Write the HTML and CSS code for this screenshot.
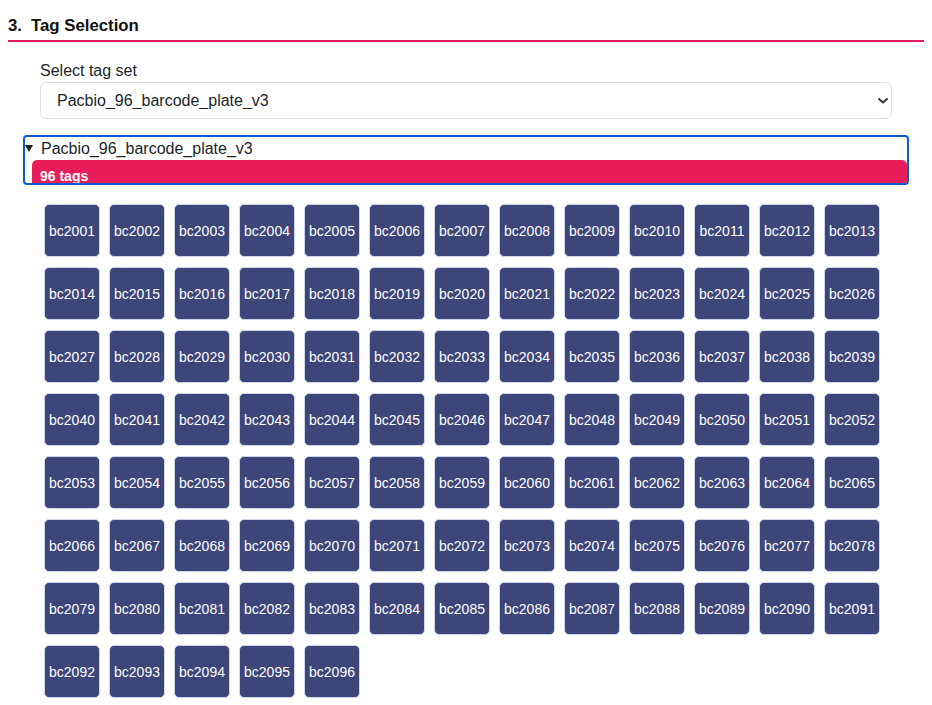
FILE: index.html
```html
<!DOCTYPE html>
<html lang="en">
<head>
<meta charset="utf-8">
<title>Tag Selection</title>
<link rel="stylesheet" href="styles.css">
</head>
<body>
<section class="section">
  <h2 class="section-title"><span class="section-num">3.</span>Tag Selection</h2>
  <div class="field">
    <label class="field-label" for="tagset">Select tag set</label>
    <div class="select-wrap">
      <select id="tagset" class="select">
        <option>Pacbio_96_barcode_plate_v3</option>
      </select>
      <svg class="chev" width="10" height="6" viewBox="0 0 10 6" aria-hidden="true"><path d="M1 1 L5 4.6 L9 1" fill="none" stroke="#343a40" stroke-width="2" stroke-linecap="round" stroke-linejoin="round"/></svg>
    </div>
  </div>
  <details class="tagset" open>
    <summary class="tagset-summary"><svg class="tri" width="8" height="7" viewBox="0 0 8 7" aria-hidden="true"><path d="M0 0 H8 L4 7 Z" fill="#222"/></svg>Pacbio_96_barcode_plate_v3</summary>
    <div class="tag-count">96 tags</div>
  </details>
  <div class="tag-grid">
    <div class="tag">bc2001</div><div class="tag">bc2002</div><div class="tag">bc2003</div><div class="tag">bc2004</div><div class="tag">bc2005</div><div class="tag">bc2006</div><div class="tag">bc2007</div><div class="tag">bc2008</div><div class="tag">bc2009</div><div class="tag">bc2010</div><div class="tag">bc2011</div><div class="tag">bc2012</div><div class="tag">bc2013</div>
    <div class="tag">bc2014</div><div class="tag">bc2015</div><div class="tag">bc2016</div><div class="tag">bc2017</div><div class="tag">bc2018</div><div class="tag">bc2019</div><div class="tag">bc2020</div><div class="tag">bc2021</div><div class="tag">bc2022</div><div class="tag">bc2023</div><div class="tag">bc2024</div><div class="tag">bc2025</div><div class="tag">bc2026</div>
    <div class="tag">bc2027</div><div class="tag">bc2028</div><div class="tag">bc2029</div><div class="tag">bc2030</div><div class="tag">bc2031</div><div class="tag">bc2032</div><div class="tag">bc2033</div><div class="tag">bc2034</div><div class="tag">bc2035</div><div class="tag">bc2036</div><div class="tag">bc2037</div><div class="tag">bc2038</div><div class="tag">bc2039</div>
    <div class="tag">bc2040</div><div class="tag">bc2041</div><div class="tag">bc2042</div><div class="tag">bc2043</div><div class="tag">bc2044</div><div class="tag">bc2045</div><div class="tag">bc2046</div><div class="tag">bc2047</div><div class="tag">bc2048</div><div class="tag">bc2049</div><div class="tag">bc2050</div><div class="tag">bc2051</div><div class="tag">bc2052</div>
    <div class="tag">bc2053</div><div class="tag">bc2054</div><div class="tag">bc2055</div><div class="tag">bc2056</div><div class="tag">bc2057</div><div class="tag">bc2058</div><div class="tag">bc2059</div><div class="tag">bc2060</div><div class="tag">bc2061</div><div class="tag">bc2062</div><div class="tag">bc2063</div><div class="tag">bc2064</div><div class="tag">bc2065</div>
    <div class="tag">bc2066</div><div class="tag">bc2067</div><div class="tag">bc2068</div><div class="tag">bc2069</div><div class="tag">bc2070</div><div class="tag">bc2071</div><div class="tag">bc2072</div><div class="tag">bc2073</div><div class="tag">bc2074</div><div class="tag">bc2075</div><div class="tag">bc2076</div><div class="tag">bc2077</div><div class="tag">bc2078</div>
    <div class="tag">bc2079</div><div class="tag">bc2080</div><div class="tag">bc2081</div><div class="tag">bc2082</div><div class="tag">bc2083</div><div class="tag">bc2084</div><div class="tag">bc2085</div><div class="tag">bc2086</div><div class="tag">bc2087</div><div class="tag">bc2088</div><div class="tag">bc2089</div><div class="tag">bc2090</div><div class="tag">bc2091</div>
    <div class="tag">bc2092</div><div class="tag">bc2093</div><div class="tag">bc2094</div><div class="tag">bc2095</div><div class="tag">bc2096</div>
  </div>
</section>
</body>
</html>
```

FILE: styles.css
```css
html, body {
  margin: 0;
  padding: 0;
  background: #ffffff;
}

body {
  font-family: "Liberation Sans", Arial, Helvetica, sans-serif;
  color: #212529;
  overflow: hidden;
}

.section {
  padding: 14px 8px 0;
}

.section-title {
  margin: 0;
  font-size: 16.8px;
  font-weight: 700;
  line-height: 24px;
  color: #111111;
  padding-bottom: 2px;
  border-bottom: 2px solid #e01a5b;
}

.section-num {
  margin-right: 9px;
}

.field {
  margin-top: 18px;
  padding: 0 32px;
}

.field-label {
  display: block;
  font-size: 16px;
  line-height: 22px;
  color: #212529;
}

.select-wrap {
  position: relative;
}

.select {
  display: block;
  width: 100%;
  height: 37px;
  margin: 0;
  padding: 0 36px 0 16px;
  box-sizing: border-box;
  -webkit-appearance: none;
  appearance: none;
  background: #ffffff;
  border: 1px solid #dee2e6;
  border-radius: 6px;
  font-family: "Liberation Sans", Arial, Helvetica, sans-serif;
  font-size: 16px;
  color: #212529;
  outline: none;
}

.chev {
  position: absolute;
  right: 4px;
  top: 16px;
  pointer-events: none;
}

.tagset {
  margin: 16px 15px 0;
  border: 2px solid #0d5bd0;
  border-radius: 4px;
  overflow: hidden;
}

.tagset-summary {
  display: flex;
  align-items: center;
  list-style: none;
  font-size: 16px;
  line-height: 23px;
  height: 23px;
  color: #212529;
  cursor: pointer;
}

.tagset-summary::-webkit-details-marker {
  display: none;
}

.tri {
  flex: none;
  margin-right: 8px;
}

.tag-count {
  margin-left: 7px;
  height: 23px;
  box-sizing: border-box;
  padding: 8px 0 0 8px;
  line-height: 16px;
  font-size: 14px;
  font-weight: 700;
  color: #ffffff;
  background: #e81e5a;
  border-radius: 5px 5px 0 0;
  overflow: hidden;
}

.tag-grid {
  display: grid;
  grid-template-columns: repeat(13, 56px);
  column-gap: 9px;
  row-gap: 10px;
  margin-top: 19px;
  padding-left: 36px;
}

.tag {
  height: 53px;
  box-sizing: border-box;
  display: flex;
  align-items: center;
  justify-content: center;
  background: #3e4578;
  border: 1px solid #cfd6ec;
  border-radius: 5px;
  color: #ffffff;
  font-size: 14px;
  white-space: nowrap;
}
```
